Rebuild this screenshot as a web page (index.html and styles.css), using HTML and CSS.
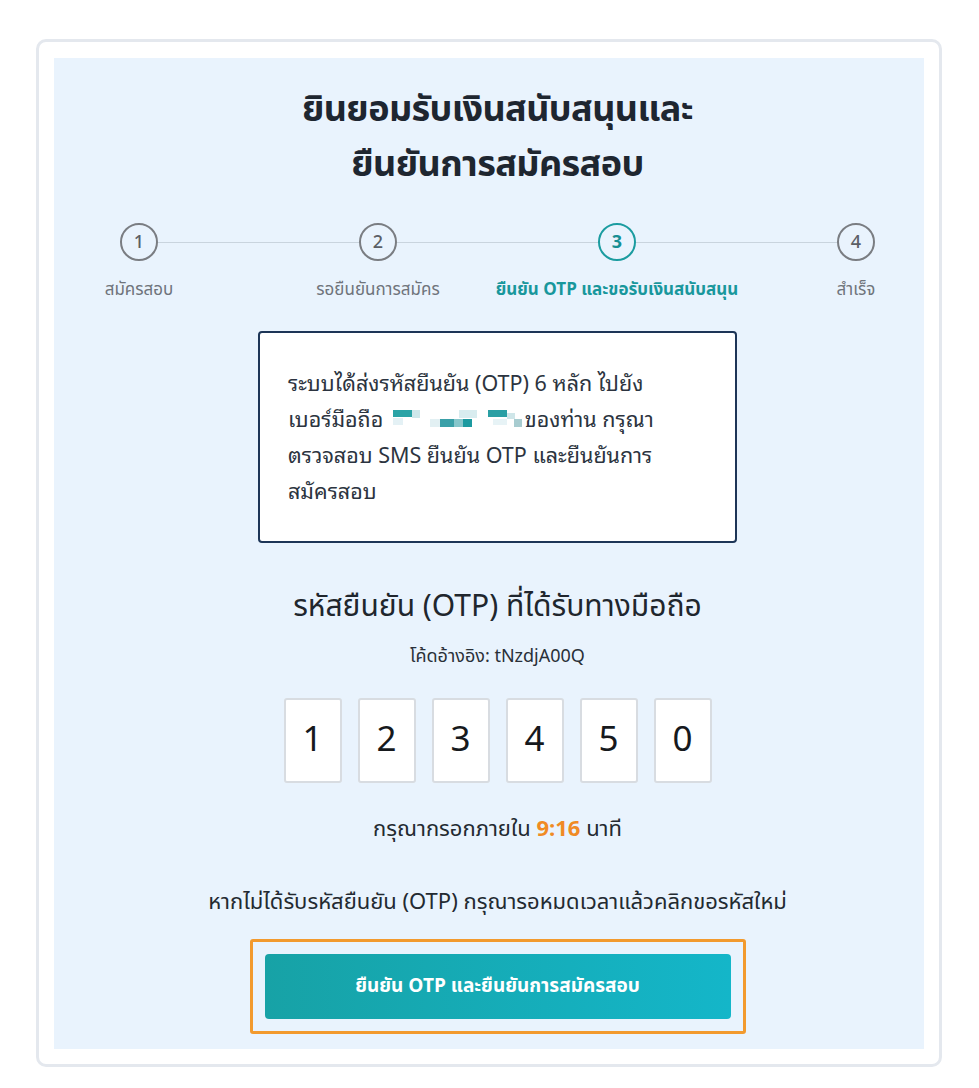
FILE: index.html
```html
<!DOCTYPE html>
<html lang="th">
<head>
<meta charset="utf-8">
<title>ยืนยัน OTP</title>
<link rel="stylesheet" href="styles.css">
</head>
<body>
<div class="card">
  <div class="panel">
    <h1 class="title">ยินยอมรับเงินสนับสนุนและ<br>ยืนยันการสมัครสอบ</h1>

    <div class="stepper">
      <div class="step">
        <div class="circle">1</div>
        <div class="label">สมัครสอบ</div>
      </div>
      <div class="step">
        <div class="circle">2</div>
        <div class="label">รอยืนยันการสมัคร</div>
      </div>
      <div class="step active">
        <div class="circle">3</div>
        <div class="label">ยืนยัน OTP และขอรับเงินสนับสนุน</div>
      </div>
      <div class="step">
        <div class="circle">4</div>
        <div class="label">สำเร็จ</div>
      </div>
    </div>

    <div class="info">
      <p>ระบบได้ส่งรหัสยืนยัน (OTP) 6 หลัก ไปยัง<br>เบอร์มือถือ <span class="masked"><svg width="130" height="20" viewBox="0 0 130 20"><rect x="0" y="1" width="19" height="7" fill="#2aa3a6"/><rect x="19" y="1" width="8" height="8" fill="#cde7ea"/><rect x="0" y="9" width="10" height="7" fill="#e4f1f5"/><rect x="37" y="10" width="10" height="8" fill="#e2f0f3"/><rect x="47" y="10" width="14" height="8" fill="#3aa0a8"/><rect x="61" y="10" width="9" height="8" fill="#86c6cb"/><rect x="70" y="10" width="9" height="8" fill="#1c9aa0"/><rect x="66" y="1" width="18" height="8" fill="#d8ecef"/><rect x="95" y="1" width="19" height="7" fill="#2a9fa4"/><rect x="114" y="4" width="8" height="6" fill="#cfe6e9"/><rect x="121" y="10" width="8" height="8" fill="#a8ccd0"/><rect x="100" y="10" width="14" height="6" fill="#e7f3f6"/></svg></span>ของท่าน กรุณา<br>ตรวจสอบ SMS ยืนยัน OTP และยืนยันการ<br>สมัครสอบ</p>
    </div>

    <h2 class="otp-title">รหัสยืนยัน (OTP) ที่ได้รับทางมือถือ</h2>
    <div class="ref">โค้ดอ้างอิง: tNzdjA00Q</div>

    <div class="otp-boxes">
      <div class="otp-box">1</div>
      <div class="otp-box">2</div>
      <div class="otp-box">3</div>
      <div class="otp-box">4</div>
      <div class="otp-box">5</div>
      <div class="otp-box">0</div>
    </div>

    <div class="timer">กรุณากรอกภายใน <span class="time">9:16</span> นาที</div>

    <div class="notice">หากไม่ได้รับรหัสยืนยัน (OTP) กรุณารอหมดเวลาแล้วคลิกขอรหัสใหม่</div>

    <div class="focus-ring">
      <button class="submit">ยืนยัน OTP และยืนยันการสมัครสอบ</button>
    </div>
  </div>
</div>
</body>
</html>
```

FILE: styles.css
```css
* { box-sizing: border-box; }

body {
  margin: 0;
  background: #ffffff;
  font-family: "Noto Sans Thai", "Noto Sans", sans-serif;
  color: #1f2933;
}

.card {
  margin: 39px 0 0 36px;
  width: 906px;
  height: 1028px;
  border: 3px solid #e4e8ee;
  border-radius: 10px;
  padding: 16px 15px;
  background: #ffffff;
}

.panel {
  height: 991px;
  background: #e9f3fd;
  display: flex;
  flex-direction: column;
  align-items: center;
  padding: 25px 0 0 17px;
}

.title {
  margin: 0;
  font-size: 36px;
  line-height: 55px;
  font-weight: 700;
  letter-spacing: -0.6px;
  text-align: center;
  color: #1e2630;
}

.stepper {
  position: relative;
  align-self: flex-start;
  margin: 30px 0 0 13px;
  width: 827px;
  display: flex;
  justify-content: space-between;
}

.stepper::before {
  content: "";
  position: absolute;
  left: 55px;
  right: 55px;
  top: 19px;
  height: 1px;
  background: #c9d4de;
}

.step {
  position: relative;
  width: 110px;
  display: flex;
  flex-direction: column;
  align-items: center;
}

.circle {
  width: 38px;
  height: 38px;
  border-radius: 50%;
  border: 2px solid #7a7d82;
  background: #e9f3fd;
  display: flex;
  align-items: center;
  justify-content: center;
  font-size: 18px;
  font-weight: 500;
  color: #5b5f66;
}

.label {
  margin-top: 17px;
  white-space: nowrap;
  font-size: 17px;
  line-height: 24px;
  color: #6f747b;
}

.step.active .circle {
  border-color: #1b9ca0;
  color: #168f94;
  font-weight: 700;
}

.step.active .label {
  color: #18979c;
  font-weight: 700;
}

.info {
  margin-top: 29px;
  width: 479px;
  height: 212px;
  background: #ffffff;
  border: 2px solid #1d3557;
  border-radius: 4px;
  padding: 31px 10px 0 28px;
}

.info p {
  margin: 0;
  font-family: "Noto Sans Thai Looped", "Noto Sans Thai", "Noto Sans", sans-serif;
  font-size: 21.5px;
  line-height: 36px;
  color: #2c3440;
  white-space: nowrap;
}

.masked {
  display: inline-block;
  vertical-align: middle;
  margin: -4px 2px 0 4px;
  line-height: 0;
}

.otp-title {
  margin: 44px 0 0;
  font-size: 30px;
  line-height: 40px;
  font-weight: 400;
  color: #20262d;
}

.ref {
  margin-top: 18px;
  font-size: 18px;
  line-height: 24px;
  color: #2a3038;
}

.otp-boxes {
  margin-top: 29px;
  display: flex;
  gap: 16px;
}

.otp-box {
  width: 58px;
  height: 85px;
  background: #ffffff;
  border: 2px solid #d8dce1;
  border-radius: 3px;
  display: flex;
  align-items: center;
  justify-content: center;
  font-size: 35px;
  color: #16191d;
}

.timer {
  margin-top: 33px;
  font-size: 22px;
  line-height: 28px;
  color: #232a31;
}

.time {
  color: #f08a24;
  font-weight: 700;
}

.notice {
  margin-top: 44px;
  font-size: 22px;
  line-height: 30px;
  color: #232a31;
}

.focus-ring {
  margin-top: 21px;
  border: 3px solid #f29a2e;
  border-radius: 3px;
  padding: 12px;
}

.submit {
  display: block;
  width: 466px;
  height: 65px;
  border: none;
  border-radius: 4px;
  background: linear-gradient(90deg, #17a2a6 0%, #14b6c9 100%);
  color: #ffffff;
  font-family: "Noto Sans Thai", "Noto Sans", sans-serif;
  font-size: 19px;
  font-weight: 700;
}
```
